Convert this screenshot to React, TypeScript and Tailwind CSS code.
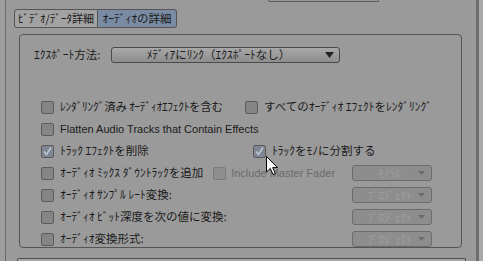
import React from "react";

const jp = "font-['Noto_Sans_CJK_JP','Liberation_Sans',sans-serif]";

function Check({ checked, dim }: { checked?: boolean; dim?: boolean }) {
  return (
    <span
      className={`relative w-[13px] h-[13px] flex-shrink-0 rounded-[2px] border ${
        dim ? "border-[#7a7a7a] bg-[#8e8e8e]" : checked ? "border-[#5a5a5a] bg-[#7f8794]" : "border-[#5c5c5c] bg-[#858585]"
      }`}
    >
      {checked && (
        <svg width="11" height="11" viewBox="0 0 11 11" className="absolute left-0 top-0">
          <path d="M2 5.5 L4.5 8.5 L9 1.5" fill="none" stroke="#bcc6d2" strokeWidth="1.6" />
        </svg>
      )}
    </span>
  );
}

function Drop({ label }: { label: string }) {
  return (
    <div className="ml-auto w-[80px] h-[16px] rounded-[3px] border border-[#6c6c6c] bg-[#8d8d8d] flex items-center pl-2 pr-1.5">
      <span className={`${jp} flex-1 text-center text-[11px] leading-none text-[#a0a0a0]`}>{label}</span>
      <svg width="7" height="4" viewBox="0 0 7 4">
        <path d="M0 0 H7 L3.5 4 Z" fill="#6c6c6c" />
      </svg>
    </div>
  );
}

function Row({ children }: { children: React.ReactNode }) {
  return <div className="h-[22px] flex items-center pl-[21px] pr-[29px]">{children}</div>;
}

function Label({ children, en, tight }: { children: React.ReactNode; en?: boolean; tight?: boolean }) {
  return (
    <span
      className={`${en ? "font-['Liberation_Sans',sans-serif] text-[11px]" : `${jp} text-[11.5px]`} ${
        tight ? "tracking-[-0.3px]" : ""
      } leading-none text-[#1a1a1a] whitespace-nowrap ml-[6px]`}
    >
      {children}
    </span>
  );
}

export default function App() {
  return (
    <div className="relative w-[483px] h-[261px] overflow-hidden bg-[#9a9a9a] flex">
      {/* left edge */}
      <div className="w-[6px] bg-[#9d9d9d] border-r border-[#6a6a6a]" />

      {/* main */}
      <div className="w-[470px] flex flex-col">
        <div className="ml-[262px] w-[111px] h-[2px] border-x border-b border-[#5a5a5a] rounded-b-[2px]" />

        {/* Tabs */}
        <div className="mt-[7px] ml-[8px] flex h-[19px]">
          <div className={`${jp} w-[84px] flex items-center justify-center whitespace-nowrap text-[11px] leading-none text-[#1a1a1a] bg-[#a2a2a2] border border-[#555] rounded-l-[3px]`}>
            ﾋﾞﾃﾞｵ/ﾃﾞｰﾀ詳細
          </div>
          <div className={`${jp} w-[79px] flex items-center justify-center whitespace-nowrap text-[11.5px] leading-none text-[#1a1a1a] bg-[#7a8ca4] border border-l-0 border-[#555] rounded-r-[3px]`}>
            ｵｰﾃﾞｨｵの詳細
          </div>
        </div>

        {/* Group */}
        <div className="mt-[6px] ml-[13px] w-[443px] h-[214px] border border-[#555] rounded-[4px] flex flex-col">
          <div className="mt-[12px] flex items-center h-[16px]">
            <span className={`${jp} ml-[14px] w-[77px] text-[11.5px] leading-none text-[#1a1a1a] whitespace-nowrap`}>ｴｸｽﾎﾟｰﾄ方法:</span>
            <div className="w-[229px] h-[16px] rounded-[3px] border border-[#4a4a4a] bg-gradient-to-b from-[#a8a8a8] to-[#8e8e8e] flex items-center pr-[5px]">
              <span className={`${jp} flex-1 text-center text-[11.5px] leading-none text-[#1a1a1a]`}>ﾒﾃﾞｨｱにﾘﾝｸ（ｴｸｽﾎﾟｰﾄなし）</span>
              <svg width="9" height="6" viewBox="0 0 9 6">
                <path d="M0 0 H9 L4.5 6 Z" fill="#222" />
              </svg>
            </div>
          </div>

          <div className="mt-[33px] flex flex-col">
            <Row>
              <div className="w-[212px] flex items-center">
                <Check />
                <Label tight>ﾚﾝﾀﾞﾘﾝｸﾞ済み ｵｰﾃﾞｨｵｴﾌｪｸﾄを含む</Label>
              </div>
              <Check />
              <Label>すべてのｵｰﾃﾞｨｵ ｴﾌｪｸﾄをﾚﾝﾀﾞﾘﾝｸﾞ</Label>
            </Row>
            <Row>
              <Check />
              <Label en>Flatten Audio Tracks that Contain Effects</Label>
            </Row>
            <Row>
              <div className="w-[212px] flex items-center">
                <Check checked />
                <Label>ﾄﾗｯｸ ｴﾌｪｸﾄを削除</Label>
              </div>
              <Check checked />
              <Label>ﾄﾗｯｸをﾓﾉに分割する</Label>
            </Row>
            <Row>
              <Check />
              <Label>ｵｰﾃﾞｨｵ ﾐｯｸｽ ﾀﾞｳﾝﾄﾗｯｸを追加</Label>
              <span className="ml-[10px]" />
              <Check dim />
              <span className="ml-[5px] font-['Liberation_Sans',sans-serif] text-[11px] leading-none text-[#6a6a6a] whitespace-nowrap">
                Include Master Fader
              </span>
              <Drop label="ﾓﾉﾗﾙ" />
            </Row>
            <Row>
              <Check />
              <Label>ｵｰﾃﾞｨｵ ｻﾝﾌﾟﾙ ﾚｰﾄ変換:</Label>
              <Drop label="ﾌﾟﾛｼﾞｪｸﾄ" />
            </Row>
            <Row>
              <Check />
              <Label>ｵｰﾃﾞｨｵ ﾋﾞｯﾄ深度を次の値に変換:</Label>
              <Drop label="ﾌﾟﾛｼﾞｪｸﾄ" />
            </Row>
            <Row>
              <Check />
              <Label>ｵｰﾃﾞｨｵ変換形式:</Label>
              <Drop label="ﾌﾟﾛｼﾞｪｸﾄ" />
            </Row>
          </div>
        </div>

        {/* lower panel edge */}
        <div className="mt-[10px] ml-[11px] w-[449px] flex-1 border-t border-x border-[#4e4e4e] rounded-t-[2px] bg-[#a6a6a6]" />
      </div>

      {/* right edge */}
      <div className="w-[3px] bg-[#6e6e6e]" />
      <div className="flex-1 bg-[#a9a9a9]" />

      {/* mouse cursor */}
      <svg width="13" height="20" viewBox="0 0 13 20" className="absolute left-[266px] top-[156px]">
        <path d="M0.5 0.5 L0.5 16 L4.3 12.4 L7 18.5 L9.3 17.5 L6.7 11.6 L11.5 11.6 Z" fill="#fff" stroke="#000" strokeWidth="1" />
      </svg>
    </div>
  );
}
